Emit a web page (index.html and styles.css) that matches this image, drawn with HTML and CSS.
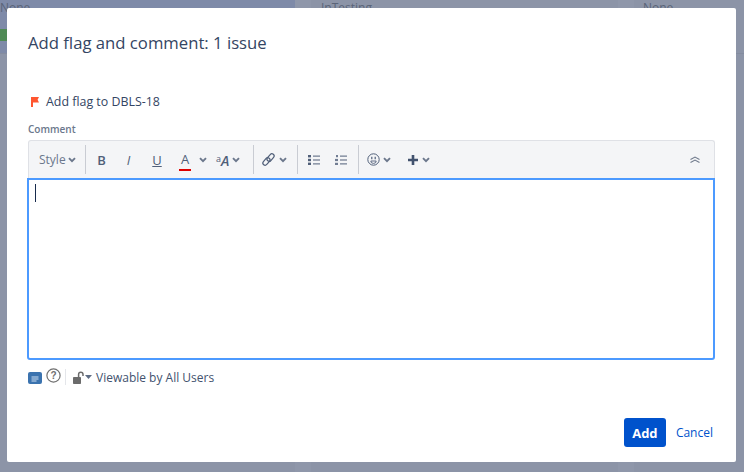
FILE: index.html
```html
<!DOCTYPE html>
<html lang="en">
<head>
<meta charset="utf-8">
<title>Add flag and comment</title>
<link rel="stylesheet" href="styles.css">
</head>
<body>
<div class="board">
  <div class="col col-first"><div class="col-head">None</div><div class="tag"></div></div>
  <div class="gutter"></div>
  <div class="col col-mid"><div class="col-head">InTesting</div></div>
  <div class="gutter gutter-right"></div>
  <div class="col col-last"><div class="col-head">None</div></div>
</div>
<div class="dialog">
  <h2 class="title">Add flag and comment: 1 issue</h2>
  <div class="flag-row">
    <svg class="flag" width="8" height="10" viewBox="0 0 8 10"><path d="M0 0h8L6.6 2.8 8 5.6H2V10H0z" fill="#ff5630"/></svg>
    <span>Add flag to DBLS-18</span>
  </div>
  <div class="label">Comment</div>
  <div class="toolbar">
    <div class="group group-style"><span class="style-text">Style</span><svg class="chev" viewBox="0 0 8 6"><path d="M1 1.2l3 3 3-3" /></svg></div>
    <div class="sep"></div>
    <div class="group group-format">
      <span class="tb b">B</span>
      <span class="tb i">I</span>
      <span class="tb u">U</span>
      <span class="tb color">A<span class="redbar"></span></span>
      <svg class="chev chev-color" viewBox="0 0 8 6"><path d="M1 1.2l3 3 3-3" /></svg>
      <span class="tb small-a"><span class="sup">a</span><span class="big-a">A</span></span>
      <svg class="chev" viewBox="0 0 8 6"><path d="M1 1.2l3 3 3-3" /></svg>
    </div>
    <div class="sep"></div>
    <div class="group group-link">
      <svg class="ico" width="15" height="15" viewBox="0 0 15 15" fill="none" stroke="#505f79" stroke-width="1.2"><rect x="-5" y="-2.2" width="8.6" height="4.4" rx="2.2" transform="translate(10 5) rotate(-50)"/><rect x="-3.6" y="-2.2" width="8.6" height="4.4" rx="2.2" transform="translate(5 10) rotate(-50)"/></svg>
      <svg class="chev" viewBox="0 0 8 6"><path d="M1 1.2l3 3 3-3" /></svg>
    </div>
    <div class="sep"></div>
    <div class="group group-lists">
      <svg width="12" height="10" viewBox="0 0 12 10" fill="#505f79"><rect x="0" y="0" width="3" height="2.4"/><rect x="0" y="3.8" width="3" height="2.4"/><rect x="0" y="7.6" width="3" height="2.4"/><rect x="5" y="0.6" width="7" height="1"/><rect x="5" y="4.5" width="7" height="1"/><rect x="5" y="8.4" width="7" height="1"/></svg>
      <svg width="12" height="10" viewBox="0 0 12 10" fill="#505f79"><rect x="1" y="0" width="2" height="2.2" opacity=".8"/><rect x="0" y="3.9" width="3" height="2.2" opacity=".8"/><rect x="0" y="7.8" width="3" height="2.2" opacity=".8"/><rect x="5" y="0.6" width="7" height="1"/><rect x="5" y="4.5" width="7" height="1"/><rect x="5" y="8.4" width="7" height="1"/></svg>
    </div>
    <div class="sep"></div>
    <div class="group group-emoji">
      <svg width="13" height="13" viewBox="0 0 13 13" fill="none" stroke="#505f79" stroke-width="1"><circle cx="6.5" cy="6.5" r="5.7"/><path d="M4.8 3.8v2.4M8.2 3.8v2.4" stroke-width="1.2"/><path d="M3.8 8h5.4a2.7 2.4 0 0 1-5.4 0z" stroke-width="0.9"/></svg>
      <svg class="chev" viewBox="0 0 8 6"><path d="M1 1.2l3 3 3-3" /></svg>
    </div>
    <div class="group group-plus">
      <svg width="10" height="10" viewBox="0 0 10 10" fill="#42526e"><path d="M3.7 0h2.6v3.7H10v2.6H6.3V10H3.7V6.3H0V3.7h3.7z"/></svg>
      <svg class="chev" viewBox="0 0 8 6"><path d="M1 1.2l3 3 3-3" /></svg>
    </div>
    <div class="collapse">
      <svg width="10" height="7" viewBox="0 0 10 7" fill="none" stroke="#707a8c" stroke-width="1.1"><path d="M0.5 3.4L5 1l4.5 2.4M0.5 6.4L5 4l4.5 2.4"/></svg>
    </div>
  </div>
  <div class="editor"><span class="caret"></span></div>
  <div class="meta">
    <svg class="note" width="14" height="12" viewBox="0 0 14 12"><rect width="14" height="12" rx="2" fill="#3b73af"/><path d="M3.5 5h7M3.5 7h7M3.5 9h5" stroke="#cfe0f2" stroke-width="1"/></svg>
    <svg class="help" width="15" height="15" viewBox="0 0 15 15" fill="none"><circle cx="7.5" cy="7.5" r="6.6" stroke="#707070" stroke-width="1.2"/><text x="7.5" y="11" text-anchor="middle" class="help-q">?</text></svg>
    <div class="meta-sep"></div>
    <svg class="lock" width="11" height="13" viewBox="0 0 11 13"><rect x="0" y="6" width="8" height="7" rx="0.8" fill="#6b6b6b"/><path d="M5.6 6V3.4a2.2 2.2 0 0 1 4.4 0V5" fill="none" stroke="#6b6b6b" stroke-width="1.5"/></svg>
    <svg class="caret-down" width="7" height="4" viewBox="0 0 7 4"><path d="M0 0h7L3.5 4z" fill="#5e6c84"/></svg>
    <span class="view">Viewable by All Users</span>
  </div>
  <div class="actions">
    <button class="add" type="button">Add</button>
    <a class="cancel" href="#">Cancel</a>
  </div>
</div>
</body>
</html>
```

FILE: styles.css
```css
* { box-sizing: border-box; }
html, body { margin: 0; height: 100%; }
body {
  width: 744px;
  height: 472px;
  overflow: hidden;
  background: #8c94a7;
  font-family: "Open Sans", "Noto Sans", sans-serif;
  color: #253858;
  position: relative;
}
.board { display: flex; height: 100%; }
.col { height: 54px; border-bottom: 1px solid #848c9f; }
.col-first { width: 295px; background: #7e8aa8; position: relative; }
.col-mid { width: 307px; background: #8c94a7; }
.col-last { flex: 1; }
.gutter { width: 16px; background: #8f97aa; height: 100%; }
.col-head { font-size: 12px; color: #5a6478; line-height: 16px; }
.col-mid .col-head { padding-left: 10px; }
.col-last .col-head { padding-left: 9px; }
.tag { position: absolute; left: 0; top: 29px; width: 7px; height: 12px; background: #4f8a55; }

.dialog {
  position: absolute;
  left: 7px;
  top: 8px;
  width: 729px;
  height: 454px;
  background: #fff;
  border-radius: 2px;
  padding: 0 21px;
  display: flex;
  flex-direction: column;
}
.title {
  margin: 24px 0 0;
  font-size: 16.7px;
  line-height: 22px;
  font-weight: 400;
  color: #344563;
}
.flag-row {
  margin-top: 39px;
  display: flex;
  align-items: center;
  gap: 7px;
  font-size: 12.4px;
  line-height: 18px;
  padding-left: 3px;
  color: #344563;
}
.flag { flex: none; }
.label {
  margin-top: 11px;
  font-size: 10px;
  font-weight: 600;
  line-height: 14px;
  color: #6b778c;
}
.toolbar {
  margin-top: 4px;
  height: 38px;
  background: #f4f5f7;
  border: 1px solid #dfe1e6;
  border-bottom: 0;
  border-radius: 3px 3px 0 0;
  display: flex;
  align-items: center;
  color: #505f79;
}
.group { display: flex; align-items: center; }
.sep { width: 1px; height: 29px; background: #c9ccd3; flex: none; }
.chev { width: 8px; height: 6px; flex: none; fill: none; stroke: #6b778c; stroke-width: 1.9; }
.group-style { padding: 0 10px; gap: 2px; width: 56px; }
.style-text { font-size: 12px; color: #6b778c; }
.group-format { width: 167px; padding-left: 10px; }
.tb { display: inline-block; text-align: center; color: #505f79; font-size: 13px; line-height: 16px; }
.b { width: 11px; font-weight: 600; }
.i { width: 11px; margin-left: 16px; font-style: italic; }
.u { width: 12px; margin-left: 17px; text-decoration: underline; }
.color { position: relative; width: 12px; margin-left: 16px; height: 18px; }
.redbar { position: absolute; left: 0; right: 0; bottom: -2px; height: 2px; background: #de0000; }
.chev-color { margin-left: 8px; }
.small-a { margin-left: 9px; margin-right: 3px; white-space: nowrap; }
.sup { font-size: 9px; vertical-align: 4px; }
.big-a { font-style: italic; font-size: 14px; font-weight: 600; }
.group-link { width: 43px; padding-left: 7px; gap: 3px; }
.group-lists { width: 60px; padding-left: 10px; gap: 15px; }
.group-emoji { width: 46px; padding-left: 8px; gap: 3px; }
.group-plus { padding-left: 3px; gap: 4px; }
.collapse { margin-left: auto; padding-right: 14px; display: flex; }
.editor {
  height: 182px;
  margin-left: -1px;
  border: 2px solid #4c9aff;
  border-radius: 0 0 3px 3px;
  padding: 4px 6px;
  background: #fff;
}
.caret { display: block; width: 1px; height: 18px; background: #172b4d; }
.meta {
  margin-top: 7px;
  display: flex;
  align-items: center;
  height: 20px;
}
.note { flex: none; margin-top: 2px; }
.help { flex: none; margin-left: 4px; margin-top: -3px; }
.help-q { font-family: "Liberation Sans", sans-serif; font-size: 10px; font-weight: 700; fill: #707070; }
.meta-sep { width: 1px; height: 16px; background: #e4e6ea; margin: 0 7px 0 4px; }
.lock { flex: none; }
.caret-down { flex: none; margin-left: 1px; }
.view { font-size: 12px; color: #42526e; margin-left: 4px; }
.actions {
  margin-top: auto;
  margin-bottom: 15px;
  display: flex;
  justify-content: flex-end;
  align-items: center;
  padding-right: 2px;
}
.add {
  width: 42px;
  height: 29px;
  background: #0052cc;
  color: #fff;
  border: 0;
  border-radius: 3px;
  font-family: inherit;
  font-size: 13px;
  font-weight: 700;
  padding: 0;
}
.cancel {
  margin-left: 10px;
  font-size: 12px;
  color: #0052cc;
  text-decoration: none;
}
```
